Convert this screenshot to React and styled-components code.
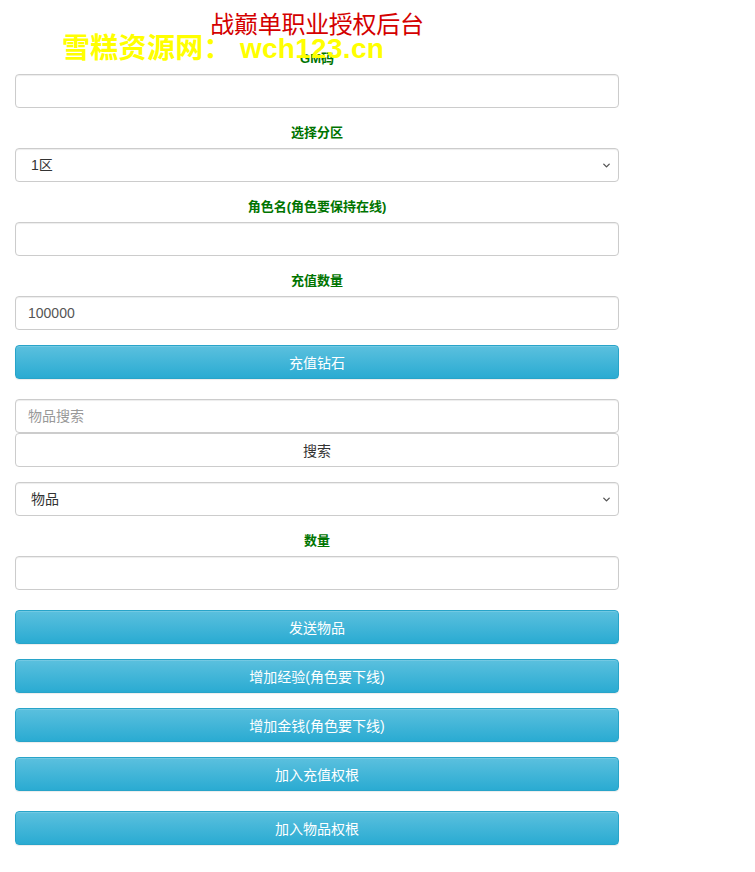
import styled, { createGlobalStyle } from "styled-components";
import { ChevronDown } from "lucide-react";

const Global = createGlobalStyle`
  html, body { margin: 0; padding: 0; background: #fff; }
  body { font-family: "Liberation Sans", "Noto Sans CJK SC", sans-serif; font-size: 14px; color: #333; }
  * { box-sizing: border-box; }
`;

const Page = styled.div`
  position: relative;
  width: 634px;
  padding: 10px 15px 20px;
`;

const Title = styled.h1`
  margin: 0;
  height: 30px;
  line-height: 30px;
  text-align: center;
  font-size: 24px;
  font-weight: 400;
  color: #d40000;
  letter-spacing: -0.3px;
`;

const Watermark = styled.div`
  position: absolute;
  left: 62px;
  top: 31px;
  font-size: 28px;
  line-height: 36px;
  font-weight: 700;
  color: #ffff00;
  white-space: nowrap;
  letter-spacing: 0.3px;
  z-index: 2;
`;

const Group = styled.div`
  display: flex;
  flex-direction: column;
  margin-bottom: ${(p) => p.$gap ?? 15}px;
`;

const Label = styled.label`
  display: block;
  height: 20px;
  line-height: 20px;
  margin-bottom: 5px;
  margin-top: ${(p) => p.$mt ?? 0}px;
  text-align: center;
  font-size: 13px;
  font-weight: 700;
  color: #007400;
`;

const Input = styled.input`
  display: block;
  width: 100%;
  height: 34px;
  padding: 6px 12px;
  font-family: inherit;
  font-size: 14px;
  color: #555;
  background: #fff;
  border: 1px solid #ccc;
  border-radius: 4px;
  box-shadow: inset 0 1px 1px rgba(0, 0, 0, 0.075);
  outline: none;
  &::placeholder { color: #999; }
`;

const SelectWrap = styled.div`
  position: relative;
  svg {
    position: absolute;
    right: 7px;
    top: 12px;
    color: #555;
    pointer-events: none;
  }
`;

const Select = styled.select`
  display: block;
  width: 100%;
  height: 34px;
  padding: 6px 14px 6px 15px;
  font-family: inherit;
  font-size: 14px;
  color: #333;
  background: #fff;
  border: 1px solid #ccc;
  border-radius: 4px;
  box-shadow: inset 0 1px 1px rgba(0, 0, 0, 0.075);
  appearance: none;
  outline: none;
`;

const Button = styled.button`
  display: block;
  width: 100%;
  height: 34px;
  margin: 0 0 ${(p) => p.$gap ?? 15}px;
  font-family: inherit;
  font-size: 14px;
  border-radius: 4px;
  cursor: pointer;
  color: #fff;
  background: linear-gradient(to bottom, #5bc0de 0%, #2aabd2 100%);
  border: 1px solid #28a4c9;
  box-shadow: inset 0 1px 0 rgba(255, 255, 255, 0.15), 0 1px 1px rgba(0, 0, 0, 0.075);
`;

const SearchButton = styled(Button)`
  color: #333;
  background: #fff;
  border-color: #ccc;
  box-shadow: none;
`;

function Dropdown({ value, options }) {
  return (
    <SelectWrap>
      <Select defaultValue={value}>
        {options.map((o) => (
          <option key={o}>{o}</option>
        ))}
      </Select>
      <ChevronDown size={11} strokeWidth={3} />
    </SelectWrap>
  );
}

export default function App() {
  return (
    <>
      <Global />
      <Page>
        <Title>战巅单职业授权后台</Title>
        <Watermark>雪糕资源网： wch123.cn</Watermark>

        <Group>
          <Label $mt={9}>GM码</Label>
          <Input type="text" />
        </Group>

        <Group>
          <Label>选择分区</Label>
          <Dropdown value="1区" options={["1区", "2区", "3区"]} />
        </Group>

        <Group>
          <Label>角色名(角色要保持在线)</Label>
          <Input type="text" />
        </Group>

        <Group>
          <Label>充值数量</Label>
          <Input type="text" defaultValue="100000" />
        </Group>

        <Button $gap={20}>充值钻石</Button>

        <Input type="text" placeholder="物品搜索" />
        <SearchButton>搜索</SearchButton>

        <Group>
          <Dropdown value="物品" options={["物品"]} />
        </Group>

        <Group $gap={20}>
          <Label>数量</Label>
          <Input type="text" />
        </Group>

        <Button>发送物品</Button>
        <Button>增加经验(角色要下线)</Button>
        <Button>增加金钱(角色要下线)</Button>
        <Button $gap={20}>加入充值权根</Button>
        <Button>加入物品权根</Button>
      </Page>
    </>
  );
}
